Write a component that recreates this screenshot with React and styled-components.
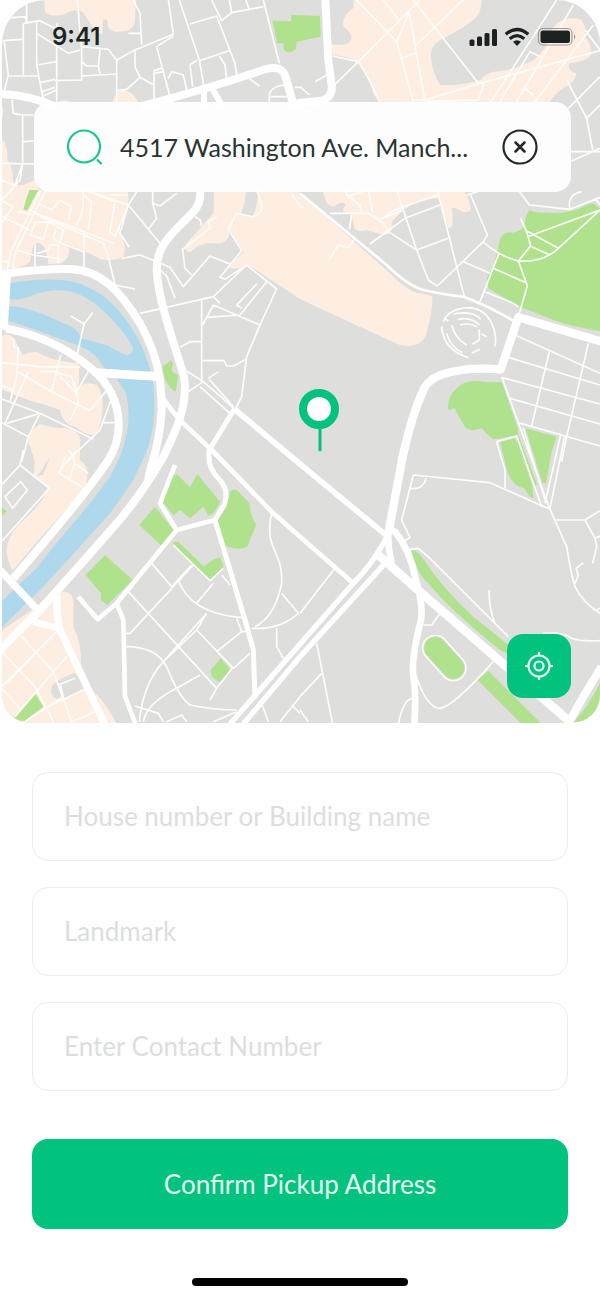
import React from "react";
import styled, { createGlobalStyle } from "styled-components";

const GlobalStyle = createGlobalStyle`
  *, *::before, *::after { box-sizing: border-box; }
  body {
    margin: 0;
    background: #fefefe;
    color: #1d2524;
    font-family: Inter, "Liberation Sans", sans-serif;
  }
  button, input { font: inherit; color: inherit; }
`;

const Screen = styled.main`
  display: flex;
  flex-direction: column;
  min-height: 100vh;
`;

const MapPanel = styled.section`
  position: relative;
  display: flex;
  flex-direction: column;
  margin-left: 2px;
  aspect-ratio: 598 / 723;
  border-radius: 44px 44px 28px 28px;
  overflow: hidden;
  background: #dededd;
`;

const MapCanvas = styled.svg`
  position: absolute;
  inset: 0;
  width: 100%;
  height: 100%;
  fill: none;
`;

const StatusBar = styled.header`
  position: relative;
  display: flex;
  align-items: center;
  justify-content: space-between;
  height: 74px;
  padding: 0 24px 0 50px;
`;

const Clock = styled.time`
  font-size: 24px;
  line-height: 32px;
  font-weight: 600;
`;

const SearchCard = styled.div`
  position: relative;
  display: flex;
  align-items: center;
  gap: 16px;
  height: 90px;
  margin: 28px 29px 0 32px;
  padding: 0 32px;
  border-radius: 16px;
  background: rgba(255, 255, 255, 0.93);
`;

const SearchInput = styled.input`
  flex: 1;
  min-width: 0;
  height: 40px;
  padding: 0;
  border: 0;
  outline: 0;
  background: transparent;
  color: #2b3332;
  font-family: "Lato", sans-serif;
  font-size: 25px;
`;

const IconButton = styled.button`
  display: flex;
  padding: 0;
  border: 0;
  background: transparent;
  cursor: pointer;
`;

const LocateButton = styled.button`
  position: absolute;
  right: 29px;
  bottom: 25px;
  display: flex;
  align-items: center;
  justify-content: center;
  width: 64px;
  height: 64px;
  padding: 0;
  border: 0;
  border-radius: 16px;
  background: #02c37e;
  cursor: pointer;
`;

const Pin = styled.svg`
  position: absolute;
  left: 53%;
  top: 389px;
  margin-left: -20px;
`;

const AddressForm = styled.form`
  display: flex;
  flex-direction: column;
  gap: 26px;
  padding: 49px 32px;
`;

const Field = styled.input`
  width: 100%;
  height: 89px;
  padding: 0 31px 2px;
  border: 1px solid #ececec;
  border-radius: 16px;
  outline: 0;
  background: transparent;
  font-family: "Lato", sans-serif;
  font-size: 26px;
  &::placeholder { color: #dcdede; opacity: 1; }
`;

const ConfirmButton = styled.button`
  height: 90px;
  margin-top: 22px;
  border: 0;
  border-radius: 16px;
  background: #02c37e;
  color: #e6faf2;
  font-family: "Lato", sans-serif;
  font-size: 26px;
  cursor: pointer;
`;

const HomeIndicator = styled.div`
  align-self: center;
  width: 36%;
  height: 8px;
  border-radius: 4px;
  background: #000;
`;

const LAND = "#dededd";
const SAND = "#fdeee1";
const PARK = "#b0e18d";
const WATER = "#aed8eb";

/* The city is drawn in six sectors, each with its own origin. */
const SECTORS = [
  {
    at: [0, 0],
    sand: [
      "M132 0L135 35C155 55 190 45 210 35Q235 25 250 38L280 85Q290 103 308 102L308 62Q320 50 323 72Q325 92 345 95Q410 98 405 50L408 0Z",
      "M336 312Q345 270 375 270Q402 278 418 312Z",
      "M165 312Q190 290 225 312Z",
      "M0 308Q16 330 6 352L0 354Z",
      "M0 412Q25 430 22 480Q40 505 38 535Q38 562 70 555L105 540L120 575Q350 570 380 600L0 600Z",
    ],
    park: ["M817 62L873 64L874 44L960 48L962 110L890 125L888 148Q865 165 852 150L850 130L832 130Z"],
    streets: [
      "M6 55L75 50L80 65V0M30 55L6 75M70 70V225M110 68V195L130 300M10 122L70 118M12 120L25 225L10 285M25 228H112M72 70L120 62L170 88M170 70V305M110 100L205 160L240 150M110 195L170 185M120 248L165 238M125 275L165 262M125 290L170 270M165 242L245 240V150L232 0M245 140L325 148L350 180V310M245 185L260 198H295L300 150M295 198L300 222M245 228L350 222",
      "M400 0L420 40L425 135M385 100H420M350 180L405 150L520 103L505 0M405 150V200L420 232L462 255M420 232L380 268L352 272M462 300V212L485 205M465 220L488 215M520 108L470 140L510 290M505 235L515 215L550 225L560 270M570 72L650 48L705 190L710 225M538 0L598 180L612 262M598 182L688 152M578 260L570 195L592 180M635 0L665 62L695 38L790 20M688 0L695 38M738 0L748 30M658 168L675 195L680 235M790 0L838 190",
      "M748 235L778 258M808 305V280Q820 255 860 255M812 290H860M885 262H900M36 300L40 340L68 345V490L45 555L0 540M6 490L103 492M68 425L103 423M68 490L60 540L6 600M100 345H68",
    ],
    roads: [
      [24, "M0 282Q90 285 165 320"],
      [24, "M425 318Q620 268 795 208Q848 192 858 235L882 320"],
      [18, "M612 265V320M638 268L668 320"],
      [24, "M976 0L985 180L995 255Q1000 300 950 304L890 310"],
    ],
  },
  {
    at: [900, 0],
    sand: [
      "M160 0L160 25Q125 45 130 80Q150 90 155 115Q150 142 92 132L98 165Q150 170 175 185Q205 220 220 280L240 312H745Q760 285 790 265Q830 245 828 220Q800 210 808 190Q860 185 873 165Q875 130 855 110Q860 60 830 55Q770 50 755 95Q740 150 700 180Q640 210 600 213Q560 215 540 240Q490 258 420 255Q395 215 393 170Q390 140 420 120Q500 80 530 50Q545 30 545 0Z",
    ],
    streets: [
      "M170 0L290 125L342 312M250 0L295 58M340 0L535 250M490 0L345 138M360 0L175 185L100 258M327 35L375 305M327 40L290 125M305 175L347 158M770 0L570 310M820 15L650 305M900 152L540 250L375 300H335M552 250L535 300L380 304M600 305L690 155L725 172M98 168L175 185Q210 240 242 312M855 90L900 150M800 240L860 355L878 450M860 355L900 315M900 230L805 325M880 75L705 305M45 245L80 225M0 260L28 285M813 455H900M813 484L900 445M670 262L700 285",
    ],
  },
  {
    at: [0, 570],
    sand: [
      "M0 0H380Q390 15 382 60Q350 100 365 140Q380 170 370 200Q340 215 300 207Q250 180 205 165Q215 200 185 220L145 222Q140 170 118 158L100 165L90 215Q70 235 30 235L0 240Z",
      "M640 0Q645 40 640 70L560 160Q545 180 570 187Q600 155 650 160Q690 160 688 118L730 185L690 228Q690 245 745 225L905 330Q1100 420 1200 465Q1260 480 1280 430Q1300 350 1297 320Q1290 315 1260 310Q1230 310 1170 250L900 10L890 0Z",
      "M0 440Q30 425 45 450Q60 480 70 495Q100 480 120 490Q150 512 235 520Q240 560 235 595Q255 570 290 585Q308 600 308 650Q305 700 292 730Q270 745 225 710Q190 705 180 660Q130 640 100 635Q50 620 0 595Z",
      "M120 702Q80 730 85 760Q102 790 104 815H240V760Q250 730 200 715Q160 715 120 702Z",
    ],
    gaps: ["M720 75Q735 50 738 0H775Q772 50 758 80Q735 80 720 75Z"],
    water: [
      "M0 285C120 262 200 265 250 285C340 320 400 410 430 480C455 540 463 580 463 640C463 700 455 745 438 790L400 870L330 970L240 1070L120 1200L0 1318V1240L50 1190L110 1135L160 1070L270 940L330 860L360 800Q400 700 378 610L350 565L310 530Q290 490 240 468L190 450Q100 415 0 385Z",
    ],
    islands: [
      "M0 328H30Q70 330 100 315C180 285 240 305 290 345Q350 395 390 455Q412 490 380 495Q350 485 325 467L245 445Q230 410 190 400Q90 350 25 348H0Z",
    ],
    park: [
      "M88 0L115 0L82 62L70 58Z",
      "M487 530L515 510L520 525Q505 545 535 555L527 605Q495 590 487 530Z",
    ],
    streets: [
      "M0 30L40 50L0 105M122 0L86 75L32 185L22 240M138 0L100 75L45 190L38 240M6 80L88 120M85 60L340 160M55 65L100 75M115 40L155 60L180 30L215 50L205 90M250 0L248 60L230 105M250 15L275 35L265 120M252 125V230M100 70L310 160L325 200L345 285L405 297M145 95L105 98L92 135L130 148L145 95L190 120L180 158L160 145L168 115M50 180L100 195L185 207M105 230V165M110 190L145 180L150 165H175V220M180 158L250 185M0 215H30",
      "M255 0L345 35L330 125L345 140L385 45L255 0M385 15H330M410 5L385 45L360 130L388 172M385 45L480 160M458 0V40L480 48L530 10M458 40L470 85L445 118M365 205L420 195L470 215L510 232L550 290L630 198L690 222M480 240L500 258L525 325M548 180L555 235L575 255M545 180L630 115L625 95L650 80M585 80L600 90L605 108M685 118L725 182L660 262L675 268L740 225L830 297L780 405L740 500L725 620L705 660M685 118L710 70L755 80Q790 75 785 40L770 0M740 225L640 320L420 370M640 320L660 340M605 330V575M640 345L608 405M620 382L720 375L800 275M640 345L780 405M770 282L710 345L725 355M605 455H570L540 472M608 512H672L680 528H700L738 508M875 10L900 50",
      "M560 543L610 575L702 655M600 590L690 670M628 568L700 650M655 545L625 565M610 575L565 605M212 378L252 402L278 368M252 402L232 492M40 445L42 470L55 475L50 560L30 635M0 517L120 530L240 532M182 495L155 605L55 545M155 605L270 662M120 545L160 545L215 560L230 610L180 560M265 545L230 605L235 640L210 690M328 592L270 660M335 625L300 720L200 815M305 698H345M0 625L120 670L280 748M0 585L40 600M120 670L20 700M85 545L15 700M0 695L85 740L65 815M120 670L85 740",
    ],
    roads: [
      [24, "M0 252Q130 235 210 237C300 240 360 300 420 400C470 490 485 560 485 660Q480 750 452 835L444 870"],
      [24, "M18 415C140 440 230 490 300 560C370 640 370 740 325 810C280 880 200 980 40 1165"],
      [26, "M20 255L10 420"],
      [26, "M290 548L480 560"],
      [24, "M600 0Q605 40 580 65C520 130 470 160 470 240C475 340 530 480 552 560C565 640 530 720 490 800Q420 920 350 1000L240 1125L110 1270L0 1380"],
      [14, "M485 620Q520 670 550 700L635 780L815 965L900 1040L1060 1180"],
      [17, "M703 657L900 822L1170 1045"],
      [15, "M703 657L628 780Q620 830 655 865Q690 900 672 945L645 990"],
    ],
  },
  {
    at: [900, 570],
    sand: [
      "M70 0Q75 50 100 50Q130 30 137 45Q115 70 155 72L162 110Q170 130 200 120Q230 130 255 135Q280 130 275 95L310 60Q360 25 415 25L445 115Q465 120 455 55Q470 50 485 65Q510 70 512 55Q505 10 485 0Z",
    ],
    park: [
      "M680 75Q685 55 700 65Q800 78 850 50Q880 32 893 50L905 60V425Q800 405 760 390L660 350L565 295L560 265L580 230L600 150Q605 125 640 128Q680 118 675 90Z",
      "M605 575L655 720V735Q610 745 580 748Q560 735 545 715Q510 728 495 710Q475 680 465 655L445 660Q440 620 470 595Q490 572 530 573Q580 580 605 575Z",
      "M600 755L645 745L697 885L700 925Q690 925 672 895Q640 890 622 845Z",
      "M655 735L712 885L700 885L650 760Z",
      "M676 715L770 740L755 785L738 880H728Z",
    ],
    streets: [
      "M90 70H205L240 90L275 65L310 50L415 15M135 0L140 15L180 45L185 68M140 20L200 0M205 0L218 68M205 70L250 100L265 125L350 180L445 145M290 0L350 180L385 270L412 288L550 155L562 135L512 15M210 162L315 85L420 45M235 90L310 60M412 0L470 230L493 320M500 15L550 0M155 75L148 118M90 205L115 165L145 172L165 145M655 0L688 45L810 58L900 22M810 55Q800 15 845 5M885 25L900 45M662 85L680 125L692 168L655 213L682 288L655 380M675 120L775 175M695 170L750 195M683 140L900 60L775 175Q730 218 655 213Q600 200 548 155M597 190L540 335M490 215L570 250M580 235L678 278M555 305L640 340L655 350",
      "M645 435L900 550M625 502L900 585M605 562L900 642M630 625L900 702M655 698L900 768M748 485L695 708M865 460L800 740L785 815M605 560L750 960M590 755L650 738L725 950M590 755L615 840V895M782 735L735 940M795 735L750 955M670 715L735 930M0 55L10 50",
      "M430 395Q445 355 510 353Q570 360 585 430Q590 455 583 470M425 410Q430 480 505 503M440 430Q450 470 487 488M432 385L445 393M460 372Q520 360 542 388M475 388Q515 380 538 405M480 405Q510 397 530 410M538 418V450L517 463M455 405Q465 445 500 465M545 432L560 440M515 490L540 478",
    ],
    roads: [
      [8, "M0 10L260 225Q320 285 370 300Q440 315 490 320Q560 345 640 392"],
      [25, "M905 455L655 382L602 538Q520 532 470 543Q390 555 370 600C330 690 320 750 308 800L278 960L265 1030"],
    ],
  },
  {
    at: [0, 1350],
    sand: [
      "M92 0Q110 30 100 75L145 110Q130 160 60 220Q15 270 20 310Q30 355 38 362L120 265L250 120Q280 60 240 30L230 0Z",
      "M0 545L110 470L170 430Q212 415 220 450L220 530Q245 580 243 640L260 710Q310 740 350 822H0Z",
    ],
    gaps: [
      "M155 710Q165 690 225 668L258 715Q210 750 170 748Q148 738 155 710Z",
      "M150 25L128 75L110 78Q130 60 135 40Z",
    ],
    park: [
      "M0 168L20 183L0 205Z",
      "M530 72L570 112L592 72L660 155L645 185L625 198L610 170L570 205L540 180L520 195L488 155L515 80Z",
      "M465 170L522 242L485 288L418 225Z",
      "M315 315L398 390L322 465L303 450V430L257 375Z",
      "M690 125Q705 110 720 130L748 160L752 190L768 225L742 290Q715 305 672 285L650 215L680 170Z",
      "M520 275L535 275L612 350Q640 325 662 322L670 350L630 392L520 285Z",
      "M632 660L662 625L692 660L658 696L635 680Z",
      "M105 728L130 770Q90 800 75 812Q50 815 42 800Z",
    ],
    streets: [
      "M70 0L60 45L0 110M60 45L148 115L0 280M62 95L15 140L38 175L82 120ZM230 0L175 68L245 110M205 0Q235 30 215 65L210 85M225 40L265 70M195 20L180 65",
      "M455 340L515 410L575 345M520 285L630 392L670 355M385 425L650 715L630 750M535 390Q570 490 725 503M590 460L640 400M375 550H390L580 345M590 540L620 490M590 540L700 655L750 610M490 635L590 540M375 590Q470 590 500 650Q535 740 570 765Q640 780 710 780M418 815Q430 700 490 635L620 490M650 605L725 545L735 545M700 650L650 715M600 675L530 715Q440 760 430 815M405 768L475 790L490 815M500 815L545 795L560 815M710 505L725 545M665 375L690 405M815 190C790 300 850 300 845 400Q825 500 765 530M755 535Q840 540 895 490L845 430M830 535V590L850 625M785 760L805 815M900 740L840 815M710 785L640 815M875 765L900 790",
      "M0 600L105 710L160 815M65 560L160 665L215 815M170 545L0 715M0 710L60 775M110 605L20 700M200 620L45 800M180 700L190 740L75 815M175 705L225 685M260 715L135 775M285 785L215 815",
    ],
    roads: [
      [22, "M0 360L118 485"],
      [22, "M172 435Q168 500 180 540L318 830"],
      [20, "M100 515L178 535"],
      [14, "M235 440L293 508L350 460L530 240L645 210M530 240L480 160L525 45"],
      [14, "M350 460L370 510L375 740L410 830"],
      [15, "M645 210L735 510L760 600L765 745"],
    ],
  },
  {
    at: [900, 1350],
    park: [
      "M335 300Q350 300 365 320Q430 420 520 500L625 585V612L600 600Q450 480 385 400Q350 370 335 300Z",
      "M565 663L533 690L665 822H725Z",
      "M905 690V770Q870 820 820 815Q860 780 905 690Z",
    ],
    streets: [
      "M340 75L570 98L750 178L800 290Q815 380 825 410Q850 460 900 490M340 75L305 210L330 262L310 275M378 85Q370 120 332 115M765 210H855L900 182M855 210L885 265L890 290L878 340M885 265L900 258M825 400L835 375L828 355L850 338M890 480L900 475M568 420Q565 470 585 520M315 300L355 295L390 325L625 560M370 525H395L420 490M105 355L0 490M50 580L98 822M65 670L0 740M0 780L25 815M345 670Q380 775 420 775Q460 770 580 635M340 745Q310 745 295 822M730 550Q790 545 815 565Q840 575 900 572",
    ],
    roads: [
      [26, "M235 315Q320 390 360 425L815 820"],
      [20, "M265 235L285 245Q330 300 345 380Q370 460 363 510C345 580 335 640 340 680Q350 740 342 830M265 240Q262 290 275 340"],
      [16, "M260 262Q220 340 160 400L-210 822M255 340L0 620L-170 822"],
      [24, "M905 650L850 740L805 820"],
    ],
  },
];

function Layer({ kind, ...paint }) {
  return (
    <g {...paint}>
      {SECTORS.filter((s) => s[kind]).map((s) => (
        <g key={s.at.join()} transform={`translate(${s.at[0]} ${s.at[1]})`}>
          {s[kind].map((d) =>
            Array.isArray(d) ? <path key={d[1]} strokeWidth={d[0]} d={d[1]} /> : <path key={d} d={d} />
          )}
        </g>
      ))}
    </g>
  );
}

function CityMap() {
  return (
    <MapCanvas viewBox="6 0 1794 2169" preserveAspectRatio="xMidYMid slice" aria-hidden="true">
      <Layer kind="sand" fill={SAND} />
      <Layer kind="gaps" fill={LAND} />
      <Layer kind="water" fill={WATER} />
      <Layer kind="islands" fill={LAND} />
      <Layer kind="park" fill={PARK} />
      <Layer kind="streets" stroke="#fdfdfc" strokeWidth="5" strokeLinejoin="round" />
      <Layer kind="roads" stroke="#fff" strokeLinejoin="round" />
      <g strokeLinecap="round">
        <path stroke="#fff" strokeWidth="80" d="M1306 1944L1360 2004" />
        <path stroke={LAND} strokeWidth="72" d="M1306 1944L1360 2004" />
        <path stroke={PARK} strokeWidth="66" d="M1306 1944L1360 2004" />
      </g>
    </MapCanvas>
  );
}

function StatusIcons() {
  return (
    <svg width="108" height="20" viewBox="0 0 108 20" fill="#1b2221" aria-hidden="true">
      <rect x="1.500" y="12.500" width="5" height="6.500" rx="1.500" />
      <rect x="9" y="9.500" width="5" height="9.500" rx="1.500" />
      <rect x="16.500" y="6" width="5" height="13" rx="1.500" />
      <rect x="24" y="2" width="5" height="17" rx="1.500" />
      <g fill="none" stroke="#1b2221" strokeWidth="3.200">
        <path d="M37.700 7.200Q49 -2.200 60.300 7.200" />
        <path d="M41.700 11.700Q49 5.500 56.300 11.700" />
      </g>
      <path d="M45 14.800Q49 11.800 53 14.800L49 19Z" />
      <rect x="70.500" y="1.500" width="33.500" height="16.500" rx="4.500" fill="none" stroke="#9d9c99" strokeWidth="1.200" />
      <rect x="72.500" y="3.500" width="29.500" height="12.500" rx="2.500" />
      <path d="M106 7Q108.500 9.700 106 12.500Z" fill="#9d9c99" />
    </svg>
  );
}

export default function App() {
  return (
    <Screen>
      <GlobalStyle />
      <MapPanel aria-label="Pickup location">
        <CityMap />
        <StatusBar>
          <Clock>9:41</Clock>
          <StatusIcons />
        </StatusBar>
        <SearchCard>
          <svg width="38" height="38" viewBox="0 0 38 38" fill="none" stroke="#19c788" strokeWidth="2.200" strokeLinecap="round" aria-hidden="true">
            <circle cx="18" cy="18.500" r="16" />
            <path d="M31.500 32L35 35.500" />
          </svg>
          <SearchInput aria-label="Pickup address" defaultValue="4517 Washington Ave. Manch..." />
          <IconButton type="button" aria-label="Clear address">
            <svg width="38" height="38" viewBox="0 0 38 38" fill="none" stroke="#222a29" strokeWidth="2.200" strokeLinecap="round" aria-hidden="true">
              <circle cx="19" cy="19" r="16.500" />
              <path strokeWidth="2.500" d="M14.500 14.500L23.500 23.500M23.500 14.500L14.500 23.500" />
            </svg>
          </IconButton>
        </SearchCard>
        <Pin width="40" height="62" viewBox="0 0 40 62" aria-hidden="true">
          <path d="M21 38V62" stroke="#02c37e" strokeWidth="3" />
          <circle cx="20" cy="20" r="16" fill="#fff" stroke="#02c37e" strokeWidth="8" />
        </Pin>
        <LocateButton type="button" aria-label="Use my location">
          <svg width="30" height="30" viewBox="0 0 30 30" fill="none" stroke="#e6faf2" strokeWidth="2.200" aria-hidden="true">
            <circle cx="15" cy="15" r="10.500" />
            <circle cx="15" cy="15" r="4.500" />
            <path d="M15 1V5M15 25V29M1 15H5M25 15H29" />
          </svg>
        </LocateButton>
      </MapPanel>
      <AddressForm onSubmit={(e) => e.preventDefault()}>
        <Field aria-label="House number or Building name" placeholder="House number or Building name" />
        <Field aria-label="Landmark" placeholder="Landmark" />
        <Field aria-label="Contact number" type="tel" placeholder="Enter Contact Number" />
        <ConfirmButton type="submit">Confirm Pickup Address</ConfirmButton>
      </AddressForm>
      <HomeIndicator />
    </Screen>
  );
}
